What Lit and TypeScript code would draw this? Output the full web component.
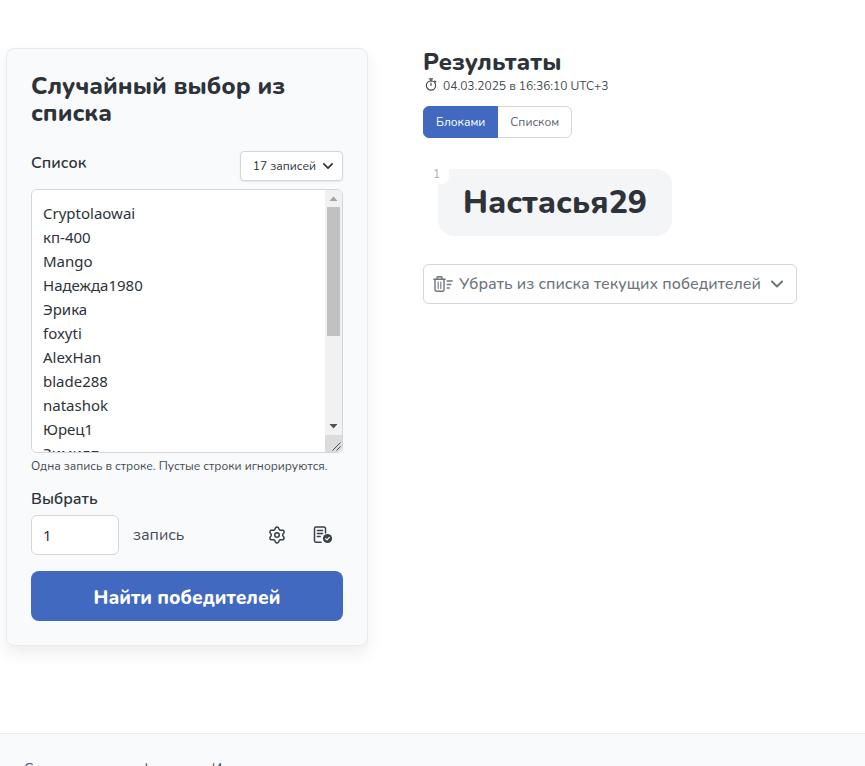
import { LitElement, html, css } from "lit";
import { customElement, state } from "lit/decorators.js";
import { classMap } from "lit/directives/class-map.js";

const ENTRIES = ["Cryptolaowai", "кп-400", "Mango", "Надежда1980", "Эрика", "foxyti", "AlexHan", "blade288", "natashok", "Юрец1", "Зимилп"];
const TOTAL = 17;

const chevron = (size: number) => html`
  <svg width=${size} height=${size} viewBox="0 0 12 12" fill="none" stroke="currentColor" stroke-width="2" stroke-linecap="round" stroke-linejoin="round" aria-hidden="true">
    <path d="M1 3.5 6 8.500 11 3.500" />
  </svg>`;

const stopwatch = html`
  <svg width="12" height="14" viewBox="0 0 12 14" fill="none" stroke="currentColor" stroke-width="1.2" stroke-linecap="round" aria-hidden="true">
    <circle cx="6" cy="7.500" r="4.600" />
    <path d="M6 5V7.500M4.400 .8h3.200M6 .8v2.100M9.700 3l1.100 1" />
  </svg>`;

// Outline of a six-lobed cog around (9, 9), one lobe pointing up.
const cogOutline = "M" + Array.from({ length: 72 }, (_, i) => {
  const angle = (i * Math.PI) / 36;
  const wave = Math.cos(6 * angle);
  const radius = 6.8 + 1.1 * Math.sign(wave) * Math.pow(Math.abs(wave), 0.6);
  return `${(9 + radius * Math.sin(angle)).toFixed(2)} ${(9 - radius * Math.cos(angle)).toFixed(2)}`;
}).join("L") + "Z";

const gear = html`
  <svg width="18" height="18" viewBox="0 0 18 18" fill="none" stroke="currentColor" stroke-width="1.500" stroke-linejoin="round" aria-hidden="true">
    <path d=${cogOutline} />
    <circle cx="9" cy="9" r="2.300" />
  </svg>`;

const documentCheck = html`
  <svg width="20" height="18" viewBox="0 0 20 18" fill="none" stroke="currentColor" stroke-width="1.500" stroke-linecap="round" stroke-linejoin="round" aria-hidden="true">
    <path d="M8 16.200H3A1.500 1.500 0 0 1 1.500 14.700V2.500A1.500 1.500 0 0 1 3 1h8a1.500 1.500 0 0 1 1.500 1.500V7" />
    <path d="M4.300 4.500h5.400M4.300 7.500h5.400M4.300 10.500h3" stroke-width="1.300" />
    <circle cx="14.500" cy="12.500" r="4.600" fill="currentColor" stroke="none" />
    <path d="m12.600 12.600 1.400 1.300 2.300-2.600" stroke="#f9fafc" stroke-width="1.200" />
  </svg>`;

const trashList = html`
  <svg width="20" height="16" viewBox="0 0 20 16" fill="none" stroke="currentColor" stroke-width="1.400" stroke-linecap="round" stroke-linejoin="round" aria-hidden="true">
    <path d="M.8 3.200h11.400M4 3V1.800A1 1 0 0 1 5 .8h3a1 1 0 0 1 1 1V3M2 3.400v10.400a1.400 1.400 0 0 0 1.400 1.400h6.200a1.400 1.400 0 0 0 1.400-1.400V3.400" />
    <path d="M5.200 6v6.500M7.800 6v6.500" stroke-width="1.100" />
    <path d="M14.200 5h5M14.200 8.500h3.600M14.200 12h2" />
  </svg>`;

@customElement("app-root")
export class AppRoot extends LitElement {
  @state() private view: "blocks" | "list" = "blocks";

  static styles = css`
    :host {
      display: flex;
      flex-direction: column;
      min-height: 100vh;
      background: #fff;
      color: #2d3339;
      font-family: Nunito, "Noto Sans", sans-serif;
      font-size: 16px;
      line-height: 24px;
    }
    * { box-sizing: border-box; }
    h1, h2, p { margin: 0; }
    button, input, textarea { font: inherit; color: inherit; margin: 0; }
    button { cursor: pointer; }
    svg { display: block; flex: none; }
    .page {
      display: grid;
      grid-template-columns: minmax(0, 362fr) minmax(0, 442fr);
      column-gap: 55px;
      padding: 48px 0 87px 6px;
      align-items: start;
    }
    .card {
      padding: 24px;
      background: #f9fafc;
      border: 1px solid #e9ebee;
      border-radius: 8px;
      box-shadow: 0 8px 16px rgba(0, 0, 0, 0.07);
    }
    .title { font-size: 24px; line-height: 27px; font-weight: 800; }
    .list-head {
      display: flex;
      justify-content: space-between;
      margin: 24px 0 8px;
    }
    .label { display: block; font-weight: 600; }
    .count {
      display: flex;
      align-items: center;
      gap: 7px;
      height: 30px;
      padding: 0 9px 0 12px;
      font-size: 12px;
      background: #fff;
      border: 1px solid #d3d6da;
      border-radius: 4px;
      box-shadow: 0 1px 2px rgba(0, 0, 0, 0.08);
    }
    .list { position: relative; }
    .entries {
      display: block;
      width: 100%;
      height: 264px;
      padding: 11px;
      border: 1px solid #d3d6da;
      border-radius: 6px;
      background: #fff;
      outline: none;
      resize: vertical;
      overflow-y: scroll;
      scrollbar-width: none;
      font-family: "Noto Sans", sans-serif;
      font-size: 15px;
    }
    .scrollbar {
      position: absolute;
      inset: 1px 1px 1px auto;
      display: flex;
      flex-direction: column;
      width: 17px;
      overflow: hidden;
      border-radius: 0 5px 5px 0;
      background: #f1f1f1;
      pointer-events: none;
    }
    .scrollbar svg { width: 17px; height: 17px; }
    .rail { flex: 1; padding: 0 2px; }
    .thumb { height: 61%; background: #c1c1c1; }
    .scrollbar .corner { background: #dcdcdc; }
    .hint { margin-top: 4px; font-size: 12px; line-height: 18px; color: #454b52; }
    .amount-label { margin: 12px 0 4px; }
    .amount { display: flex; align-items: center; color: #454b52; }
    .number {
      width: 88px;
      height: 40px;
      margin-right: 14px;
      padding: 0 11px;
      border: 1px solid #d3d6da;
      border-radius: 6px;
      background: #fff;
      outline: none;
      color: #2d3339;
      font-family: "Noto Sans", sans-serif;
      font-size: 15px;
    }
    .tools { display: flex; gap: 5px; margin-left: auto; }
    .tool {
      display: grid;
      place-items: center;
      width: 41px;
      height: 38px;
      padding: 0;
      border: 0;
      background: none;
      color: #3b4148;
    }
    .submit {
      display: block;
      width: 100%;
      height: 50px;
      margin-top: 16px;
      padding: 4px 0 0;
      border: 0;
      border-radius: 8px;
      background: #4069bf;
      color: #fff;
      font-size: 19px;
      font-weight: 800;
    }
    .heading { font-size: 24px; line-height: 28px; font-weight: 800; }
    .time {
      display: flex;
      align-items: center;
      gap: 6px;
      padding-left: 2px;
      font-size: 12px;
      line-height: 20px;
      color: #454b52;
    }
    .time svg { margin-bottom: 2px; }
    .toggle { display: flex; margin: 10px 0 31px; }
    .option {
      height: 32px;
      padding: 0 12px;
      border: 1px solid #d3d6da;
      background: #fff;
      font-size: 12px;
      color: #5a6169;
    }
    .option:first-child { border-radius: 6px 0 0 6px; }
    .option:last-child { margin-left: -1px; border-radius: 0 6px 6px 0; }
    .option.active { position: relative; background: #4069bf; border-color: #4069bf; color: #fff; }
    .winners { display: flex; flex-wrap: wrap; gap: 16px; padding-left: 15px; }
    .winner {
      position: relative;
      padding: 12px 25px;
      border-radius: 16px;
      background: #f3f5f7;
      font-size: 32px;
      line-height: 43px;
      font-weight: 800;
    }
    .place {
      position: absolute;
      top: -5px;
      left: -13px;
      padding: 0 9px 0 8px;
      border-radius: 8px;
      background: #fff;
      font-size: 12px;
      line-height: 20px;
      font-weight: 400;
      color: #a9adb2;
    }
    .remove {
      display: flex;
      align-items: center;
      gap: 6px;
      height: 40px;
      margin-top: 28px;
      padding: 0 13px 0 9px;
      border: 1px solid #d3d6da;
      border-radius: 6px;
      background: #fff;
      font-weight: 500;
      color: #6c757d;
    }
    .remove .caption { margin-right: 4px; }
    .footer {
      flex: 1;
      display: flex;
      gap: 28px;
      padding: 23px 24px 0;
      border-top: 1px solid #e9ebee;
      background: #f9fafc;
      font-size: 14px;
    }
    .link { color: #4a5078; text-decoration: none; }
  `;

  private option(id: "blocks" | "list", text: string) {
    return html`<button
      type="button"
      class=${classMap({ option: true, active: this.view === id })}
      aria-pressed=${this.view === id}
      @click=${() => (this.view = id)}
    >${text}</button>`;
  }

  render() {
    return html`
      <main class="page">
        <form class="card" @submit=${(e: Event) => e.preventDefault()}>
          <h1 class="title">Случайный выбор из списка</h1>
          <div class="list-head">
            <label class="label" for="entries">Список</label>
            <button type="button" class="count" aria-haspopup="menu">${TOTAL} записей ${chevron(10)}</button>
          </div>
          <div class="list">
            <textarea id="entries" class="entries" spellcheck="false" .value=${ENTRIES.join("\n") + "\n".repeat(TOTAL - ENTRIES.length)}></textarea>
            <div class="scrollbar" aria-hidden="true">
              <svg viewBox="0 0 17 17"><path d="M4.500 11 8.500 6.500 12.500 11z" fill="#a3a3a3" /></svg>
              <div class="rail"><div class="thumb"></div></div>
              <svg viewBox="0 0 17 17"><path d="M4.500 6 8.500 10.500 12.500 6z" fill="#505050" /></svg>
              <svg class="corner" viewBox="0 0 17 17"><path d="M7.500 15.500 15.500 7.500M11.500 15.500 15.500 11.500" stroke="#505050" /></svg>
            </div>
          </div>
          <p class="hint">Одна запись в строке. Пустые строки игнорируются.</p>
          <label class="label amount-label" for="amount">Выбрать</label>
          <div class="amount">
            <input id="amount" class="number" type="number" min="1" .value=${"1"} />
            <span>запись</span>
            <div class="tools">
              <button type="button" class="tool" aria-label="Настройки">${gear}</button>
              <button type="button" class="tool" aria-label="Протокол">${documentCheck}</button>
            </div>
          </div>
          <button type="submit" class="submit">Найти победителей</button>
        </form>
        <section>
          <h2 class="heading">Результаты</h2>
          <p class="time">${stopwatch} 04.03.2025 в 16:36:10 UTC+3</p>
          <div class="toggle" role="group">
            ${this.option("blocks", "Блоками")}${this.option("list", "Списком")}
          </div>
          <div class="winners">
            <div class="winner"><span class="place">1</span>Настасья29</div>
          </div>
          <button type="button" class="remove" aria-haspopup="menu">
            ${trashList}<span class="caption">Убрать из списка текущих победителей</span>${chevron(12)}
          </button>
        </section>
      </main>
      <footer class="footer">
        <a class="link" href="#services">Сервисы и курсы фонда</a>
        <a class="link" href="#tools">Инструменты</a>
      </footer>
    `;
  }
}
